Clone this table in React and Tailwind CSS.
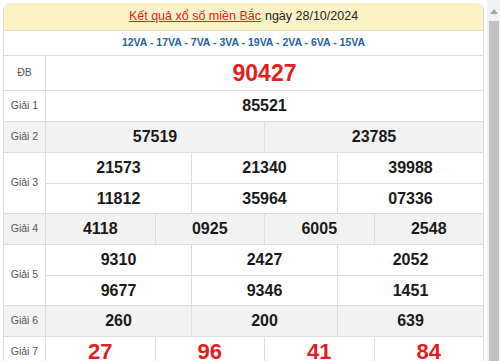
const codes = '12VA - 17VA - 7VA - 3VA - 19VA - 2VA - 6VA - 15VA'

const prizes = [
    { label: 'ĐB', rows: [['90427']], big: true, h: 'h-[34px]' },
    { label: 'Giải 1', rows: [['85521']] },
    { label: 'Giải 2', rows: [['57519', '23785']], gray: true },
    { label: 'Giải 3', rows: [['21573', '21340', '39988'], ['11812', '35964', '07336']] },
    { label: 'Giải 4', rows: [['4118', '0925', '6005', '2548']], gray: true },
    { label: 'Giải 5', rows: [['9310', '2427', '2052'], ['9677', '9346', '1451']] },
    { label: 'Giải 6', rows: [['260', '200', '639']], gray: true },
    { label: 'Giải 7', rows: [['27', '96', '41', '84']], red: true },
]

const PrizeRow = ({ prize }) => {
    const numClass = prize.big
        ? 'text-[23px] text-[#e41c23]'
        : prize.red
            ? 'text-[22px] text-[#e41c23]'
            : 'text-[16px] text-[#1a1a1a]'

    return (
        <div className={`flex border-t border-[#dcdcdc] ${prize.gray ? 'bg-[#f2f2f2]' : 'bg-white'}`}>
            <div className="w-[42px] shrink-0 flex items-center justify-center border-r border-[#dcdcdc] text-[10.5px] text-[#555]">
                {prize.label}
            </div>
            <div className="flex-1 flex flex-col">
                {prize.rows.map((row, i) => (
                    <div
                        key={i}
                        className={`flex ${prize.h || 'h-[30px]'} ${i > 0 ? 'border-t border-[#dcdcdc]' : ''}`}
                    >
                        {row.map((n, j) => (
                            <div
                                key={j}
                                className={`flex-1 flex items-center justify-center font-bold leading-none ${numClass} ${j > 0 ? 'border-l border-[#dcdcdc]' : ''}`}
                            >
                                {n}
                            </div>
                        ))}
                    </div>
                ))}
            </div>
        </div>
    )
}

export default function App() {
    return (
        <div className="w-[500px] h-[361px] overflow-hidden bg-white flex" style={{ fontFamily: '"Liberation Sans", Arial, sans-serif' }}>
            <div className="w-[487px] pl-[3px] pr-[3px] pt-[3px]">
                <div className="border-x border-[#dcdcdc] rounded-t-[7px]">
                    <div className="h-[27px] bg-[#fdf1c6] rounded-t-[7px] flex items-center justify-center text-[12.5px] text-[#222]">
                        <a href="#" className="text-[#e41c23] underline">Kết quả xổ số miền Bắc</a>
                        <span className="ml-[4px]">ngày 28/10/2024</span>
                    </div>
                    <div className="h-[25px] flex items-center justify-center border-t border-[#dcdcdc] text-[10.5px] font-bold text-[#2461a8]">
                        {codes}
                    </div>
                    {prizes.map((p) => (
                        <PrizeRow key={p.label} prize={p} />
                    ))}
                </div>
            </div>
            <div className="w-[13px] bg-[#f1f1f1] flex flex-col items-center">
                <svg width="8" height="5" viewBox="0 0 8 5" className="mt-[9px]">
                    <path d="M0 5 L4 0 L8 5 Z" fill="#a3a3a3" />
                </svg>
                <div className="mt-[7px] w-[10px] flex-1 bg-[#c1c1c1]" />
            </div>
        </div>
    )
}
